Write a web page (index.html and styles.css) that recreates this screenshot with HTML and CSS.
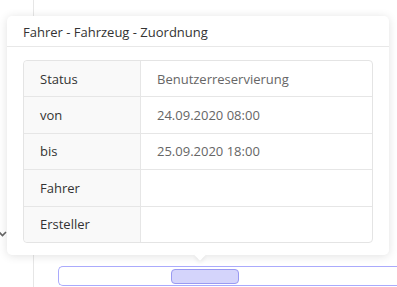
FILE: index.html
```html
<!DOCTYPE html>
<html lang="de">
<head>
    <meta charset="UTF-8">
    <meta name="viewport" content="width=device-width, initial-scale=1.0">
    <title>Zuordnung</title>
    <link rel="stylesheet" href="styles.css">
</head>
<body>

<div class="page">
    <div class="sidebar">
        <svg class="chevron" width="9" height="6" viewBox="0 0 9 6">
            <path d="M1 1 L4.5 4.5 L8 1" fill="none" stroke="#666" stroke-width="1.6"/>
        </svg>
    </div>
    <div class="main">
        <div class="timeline">
            <div class="slot"></div>
        </div>
    </div>
</div>

<div class="popover">
    <div class="popover-title">Fahrer - Fahrzeug - Zuordnung</div>
    <div class="popover-body">
        <table class="details">
            <tr><td class="label">Status</td><td class="value">Benutzerreservierung</td></tr>
            <tr><td class="label">von</td><td class="value">24.09.2020 08:00</td></tr>
            <tr><td class="label">bis</td><td class="value">25.09.2020 18:00</td></tr>
            <tr><td class="label">Fahrer</td><td class="value"></td></tr>
            <tr><td class="label">Ersteller</td><td class="value"></td></tr>
        </table>
    </div>
    <div class="arrow"></div>
</div>

</body>
</html>
```

FILE: styles.css
```css
body {
    font-family: "Open Sans", Arial, sans-serif;
    background-color: #fff;
    margin: 0;
    padding: 0;
    color: #333;
    overflow: hidden;
}

.page {
    display: flex;
    height: 287px;
}

.sidebar {
    width: 34px;
    border-right: 1px solid #e6e6e6;
    padding-top: 231px;
    box-sizing: border-box;
}

.chevron {
    display: block;
    margin-left: -2px;
}

.main {
    flex: 1;
    padding-top: 266px;
    padding-left: 24px;
}

.timeline {
    height: 20px;
    box-sizing: border-box;
    border: 1px solid #aaaafc;
    border-right: none;
    border-radius: 5px 0 0 5px;
    padding: 2px 0 0 112px;
}

.slot {
    width: 66px;
    height: 13px;
    background-color: #d4d4fb;
    border: 1px solid #9a9af2;
    border-radius: 4px;
}

.popover {
    position: absolute;
    left: 7px;
    top: 16px;
    width: 382px;
    height: 239px;
    background-color: #fff;
    border-radius: 5px;
    box-shadow: 0 1px 10px rgba(0, 0, 0, 0.12);
}

.popover-title {
    height: 31px;
    box-sizing: border-box;
    padding: 7px 16px 0;
    font-size: 13px;
    color: #333;
    border-bottom: 1px solid #e8e8e8;
}

.popover-body {
    padding: 13px 16px 0;
}

.details {
    width: 100%;
    border-collapse: separate;
    border-spacing: 0;
    border: 1px solid #e4e4e4;
    border-radius: 4px;
    font-size: 13px;
}

.details td {
    height: 35.4px;
    padding: 0 0 0 16px;
    border-bottom: 1px solid #e6e6e6;
}

.details tr:last-child td {
    border-bottom: none;
}

.details .label {
    width: 100px;
    background-color: #f9f9f9;
    border-right: 1px solid #e6e6e6;
    color: #333;
}

.details .value {
    color: #666;
}

.details tr:first-child .label {
    border-top-left-radius: 4px;
}

.details tr:last-child .label {
    border-bottom-left-radius: 4px;
}

.arrow {
    position: absolute;
    left: 189px;
    bottom: -4px;
    width: 8px;
    height: 8px;
    background-color: #fff;
    transform: rotate(45deg);
    box-shadow: 2px 2px 4px rgba(0, 0, 0, 0.06);
}
```
